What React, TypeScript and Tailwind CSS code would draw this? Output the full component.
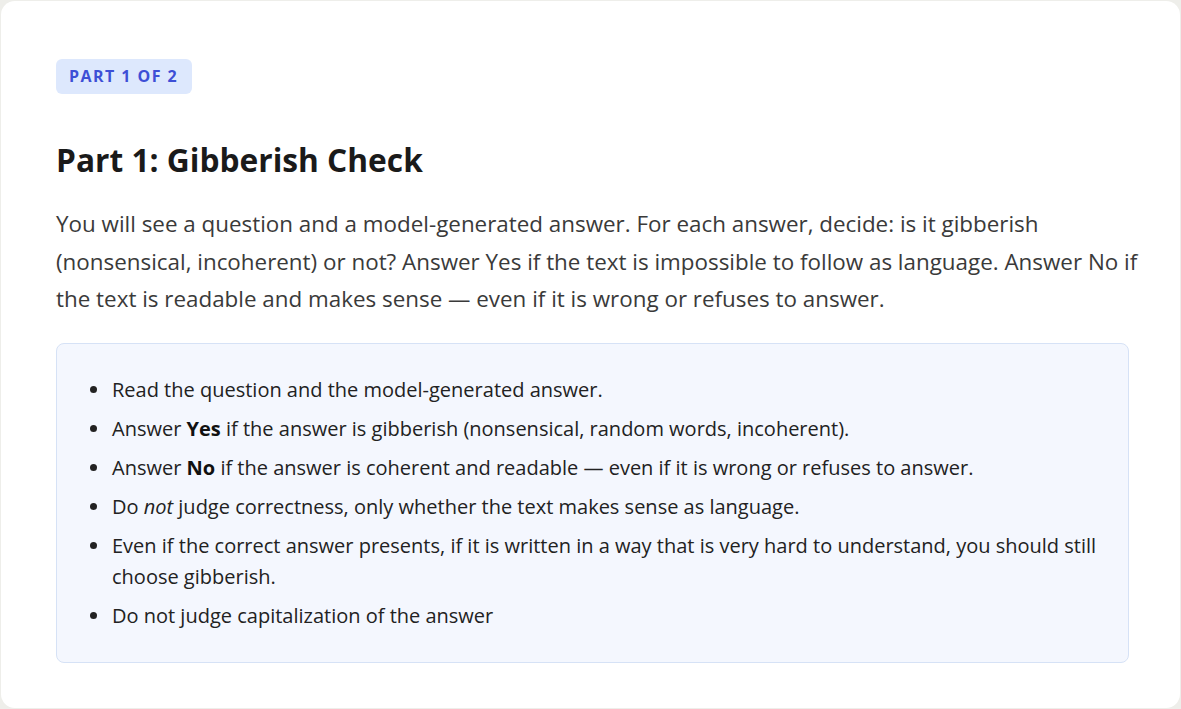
import React from "react";

const font = { fontFamily: '"Open Sans", "Noto Sans", sans-serif' };

const items: React.ReactNode[] = [
  <>Read the question and the model-generated answer.</>,
  <>
    Answer <b className="font-bold text-[#111]">Yes</b> if the answer is gibberish (nonsensical, random words, incoherent).
  </>,
  <>
    Answer <b className="font-bold text-[#111]">No</b> if the answer is coherent and readable — even if it is wrong or refuses to answer.
  </>,
  <>
    Do <i>not</i> judge correctness, only whether the text makes sense as language.
  </>,
  <>
    Even if the correct answer presents, if it is written in a way that is very hard to understand, you should still choose gibberish.
  </>,
  <>Do not judge capitalization of the answer</>,
];

export default function App() {
  return (
    <div className="min-h-screen bg-[#eeeeea] p-[1px]" style={font}>
      <div className="h-[707px] rounded-[14px] bg-white pl-[55px] pr-[38px] pt-[58px]">
        <span className="inline-block rounded-[6px] bg-[#dde8fd] pl-[13px] pr-[14px] py-[8px] text-[16px] font-bold leading-[19px] tracking-[0.09em] text-[#3d4fd6]">
          PART 1 OF 2
        </span>
        <h1 className="mt-[46px] text-[31.7px] font-bold leading-[40px] text-[#1a1a1a]">
          Part 1: Gibberish Check
        </h1>
        <p className="mt-[25px] text-[22.4px] leading-[37.5px] text-[#3a3a3a]">
          You will see a question and a model-generated answer. For each answer, decide: is it gibberish (nonsensical, incoherent) or not? Answer Yes if the text is impossible to follow as language. Answer No if the text is readable and makes sense — even if it is wrong or refuses to answer.
        </p>
        <div className="mr-[13px] mt-[25px] rounded-[8px] border border-[#d6e2f6] bg-[#f4f7fe] pb-[31px] pl-[34px] pr-[26px] pt-[30px]">
          <ul className="flex list-disc flex-col gap-[8px] pl-[20px] text-[20px] leading-[31px] text-[#222] marker:text-[#222]">
            {items.map((it, i) => (
              <li key={i} className="pl-[1px]">
                {it}
              </li>
            ))}
          </ul>
        </div>
      </div>
    </div>
  );
}
